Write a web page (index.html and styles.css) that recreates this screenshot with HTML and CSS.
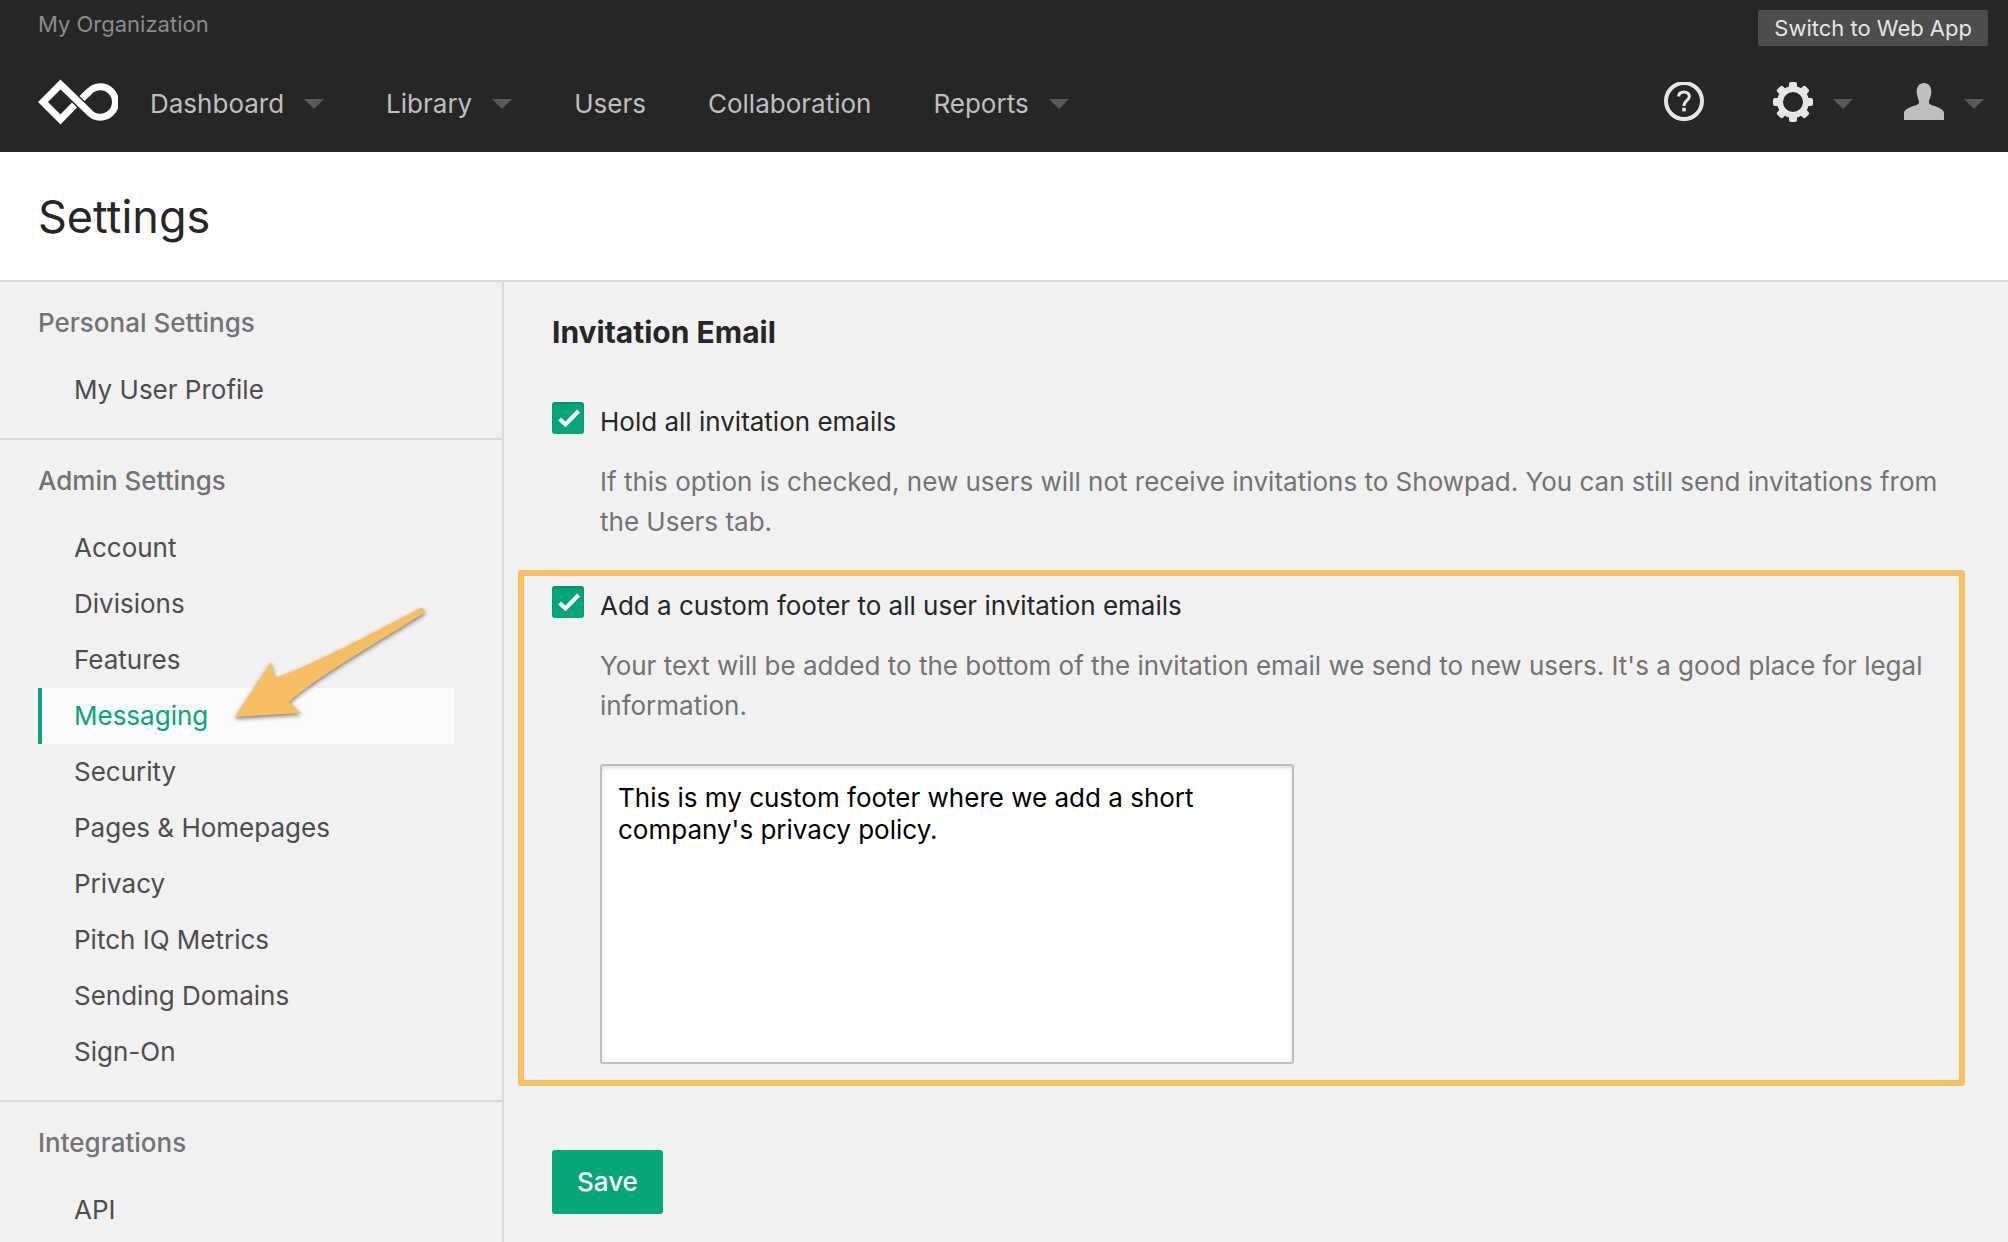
FILE: index.html
```html
<!DOCTYPE html>
<html lang="en">
<head>
    <meta charset="UTF-8">
    <title>Settings</title>
    <meta name="viewport" content="width=device-width, initial-scale=1.0">
    <link rel="stylesheet" href="styles.css">
</head>
<body>
    <header class="site-header">
        <div class="top-bar">
            <span class="org-name">My Organization</span>
            <a class="switch-app" href="#">Switch to Web App</a>
        </div>

        <div class="nav-bar">
            <a class="logo" href="#" aria-label="Home">
                <svg viewBox="0 0 80 46" width="80" height="46">
                    <path d="M36.5 26 L22.5 40.5 L5 23 L22.5 5.5 L51.4 33.6 A15.2 15.2 0 1 0 51.4 12.4 L44 19.5" fill="none" stroke="#ffffff" stroke-width="7"/>
                </svg>
            </a>
            <nav class="main-nav">
                <a class="has-menu" href="#">Dashboard</a>
                <a class="has-menu" href="#">Library</a>
                <a href="#">Users</a>
                <a href="#">Collaboration</a>
                <a class="has-menu" href="#">Reports</a>
            </nav>
            <div class="tools">
                <a class="help" href="#" aria-label="Help">
                    <svg viewBox="0 1 40 40" width="40" height="40">
                        <circle cx="20" cy="20" r="18" fill="none" stroke="#e6e6e6" stroke-width="4"/>
                        <path d="M14.7 15.5 C14.7 12.3 17 11 20 11 C23.2 11 25.3 12.8 25.3 15.5 C25.3 19.5 20 19.5 20 25" fill="none" stroke="#e6e6e6" stroke-width="3"/>
                        <rect x="18.2" y="26.8" width="3.6" height="3.6" fill="#e6e6e6"/>
                    </svg>
                </a>
                <a class="has-menu" href="#" aria-label="Settings">
                    <svg viewBox="-20 -20 40 40" width="40" height="40">
                        <circle r="13" fill="none" stroke="#e6e6e6" stroke-width="6"/>
                        <g fill="#e6e6e6">
                            <rect x="-4" y="-20" width="8" height="8" rx="2"/>
                            <rect x="-4" y="-20" width="8" height="8" rx="2" transform="rotate(45)"/>
                            <rect x="-4" y="-20" width="8" height="8" rx="2" transform="rotate(90)"/>
                            <rect x="-4" y="-20" width="8" height="8" rx="2" transform="rotate(135)"/>
                            <rect x="-4" y="-20" width="8" height="8" rx="2" transform="rotate(180)"/>
                            <rect x="-4" y="-20" width="8" height="8" rx="2" transform="rotate(225)"/>
                            <rect x="-4" y="-20" width="8" height="8" rx="2" transform="rotate(270)"/>
                            <rect x="-4" y="-20" width="8" height="8" rx="2" transform="rotate(315)"/>
                        </g>
                    </svg>
                </a>
                <a class="has-menu" href="#" aria-label="Account">
                    <svg viewBox="0 1 40 40" width="40" height="40">
                        <path d="M20 2 C25 2 27.5 6 27.3 11 C27.1 16 25 18.5 25 21 C25 24 28 24 32 25.5 C37 27.5 40 29 40 32.5 V39 H0 V32.5 C0 29 3 27.5 8 25.5 C12 24 15 24 15 21 C15 18.5 13 16 12.7 11 C12.5 6 15 2 20 2 Z" fill="#bfbfbf"/>
                    </svg>
                </a>
            </div>
        </div>
    </header>

    <div class="page-title">
        <h1>Settings</h1>
    </div>

    <div class="layout">
        <aside class="sidebar">
            <section>
                <h2>Personal Settings</h2>
                <ul>
                    <li><a href="#">My User Profile</a></li>
                </ul>
            </section>
            <section>
                <h2>Admin Settings</h2>
                <ul>
                    <li><a href="#">Account</a></li>
                    <li><a href="#">Divisions</a></li>
                    <li><a href="#">Features</a></li>
                    <li class="active">
                        <a href="#">Messaging</a>
                        <!-- Arrow pointing at the active item -->
                        <svg class="arrow" viewBox="0 0 200 120" width="200" height="120">
                            <path d="M5 107 L41 52 L45 68 C86 54 140 24 191 -2 C194 -2 196 1 194 3 C150 31 88 66 59 92 L71 103 Z" fill="#f7be62"/>
                        </svg>
                    </li>
                    <li><a href="#">Security</a></li>
                    <li><a href="#">Pages &amp; Homepages</a></li>
                    <li><a href="#">Privacy</a></li>
                    <li><a href="#">Pitch IQ Metrics</a></li>
                    <li><a href="#">Sending Domains</a></li>
                    <li><a href="#">Sign-On</a></li>
                </ul>
            </section>
            <section>
                <h2>Integrations</h2>
                <ul>
                    <li><a href="#">API</a></li>
                </ul>
            </section>
        </aside>

        <main>
            <form>
                <h2>Invitation Email</h2>

                <div class="option">
                    <input type="checkbox" id="hold-emails" checked>
                    <div class="option-body">
                        <label for="hold-emails">Hold all invitation emails</label>
                        <p>If this option is checked, new users will not receive invitations to Showpad. You can still send invitations from the Users tab.</p>
                    </div>
                </div>

                <div class="option highlight">
                    <input type="checkbox" id="custom-footer" checked>
                    <div class="option-body">
                        <label for="custom-footer">Add a custom footer to all user invitation emails</label>
                        <p>Your text will be added to the bottom of the invitation email we send to new users. It's a good place for legal information.</p>
                        <textarea aria-label="Custom footer">This is my custom footer where we add a short company's privacy policy.</textarea>
                    </div>
                </div>

                <button class="save" type="submit">Save</button>
            </form>
        </main>
    </div>
</body>
</html>
```
FILE: styles.css
```css
/* General Styles */
* {
    box-sizing: border-box;
}

body {
    display: flex;
    flex-direction: column;
    min-height: 100vh;
    margin: 0;
    background-color: #f1f1f1;
    color: #262626;
    font-family: Inter, 'Liberation Sans', sans-serif;
    font-size: 26px;
    line-height: 40px;
}

a {
    color: inherit;
    text-decoration: none;
}

h1, h2, p, ul {
    margin: 0;
    padding: 0;
}

/* Header Styles */
.site-header {
    background-color: #262626;
    color: #bfbfbf;
}

.top-bar {
    display: flex;
    justify-content: space-between;
    padding: 10px 20px 0 38px;
    font-size: 22px;
    line-height: 36px;
}

.org-name {
    color: #8c8c8c;
    line-height: 28px;
}

.switch-app {
    padding: 0 16px;
    border-radius: 2px;
    background-color: #4d4d4d;
    color: #e6e6e6;
}

.nav-bar {
    display: flex;
    align-items: center;
    height: 106px;
    padding: 10px 24px 0 38px;
}

.nav-bar svg {
    margin-bottom: 4px;
}

.logo {
    display: flex;
    margin-right: 32px;
}

.main-nav {
    display: flex;
    gap: 62px;
}

.tools {
    display: flex;
    gap: 51px;
    margin-left: auto;
}

.tools a {
    display: flex;
}

.tools .help {
    margin-right: 18px;
}

/* Small triangle for items with a menu */
.has-menu {
    display: flex;
    align-items: center;
    gap: 20px;
}

.has-menu::after {
    content: '';
    border: 10px solid transparent;
    border-top-color: #595959;
    border-bottom: 0;
}

/* Page Title */
.page-title {
    padding: 33px 38px 31px;
    border-bottom: 2px solid #d9d9d9;
    background-color: #ffffff;
}

h1 {
    font-size: 45px;
    font-weight: 400;
    line-height: 64px;
}

/* Layout */
.layout {
    display: flex;
    flex: 1;
}

/* Sidebar Styles */
.sidebar {
    flex: 0 0 504px;
    border-right: 2px solid #d9d9d9;
    color: #4d4d4d;
}

.sidebar section {
    padding: 21px 48px 20px 38px;
}

.sidebar section + section {
    border-top: 2px solid #d9d9d9;
}

.sidebar h2 {
    margin-bottom: 19px;
    color: #737373;
    font-size: 26px;
    font-weight: 500;
}

.sidebar ul {
    list-style: none;
}

.sidebar li {
    position: relative;
    padding-left: 32px;
    border-left: 4px solid transparent;
    line-height: 56px;
}

.sidebar .active {
    border-left-color: #05a67a;
    background-color: #fbfbfb;
    color: #05a67a;
}

.arrow {
    position: absolute;
    left: 188px;
    bottom: 14px;
    overflow: visible;
    pointer-events: none;
    filter: drop-shadow(0 2px 2px rgba(0, 0, 0, 0.5));
}

/* Form Styles */
main {
    flex: 1;
    padding: 30px 48px 28px;
}

main h2 {
    margin-bottom: 50px;
    font-size: 30px;
    font-weight: 700;
}

.option {
    display: flex;
    gap: 16px;
}

.option input {
    flex: none;
    appearance: none;
    width: 32px;
    height: 32px;
    margin: 0;
    border-radius: 3px;
    background-color: #05a67a;
    box-shadow: inset 0 2px 3px rgba(0, 0, 0, 0.15);
}

.option input:checked {
    background-image: url("data:image/svg+xml,%3Csvg xmlns='http://www.w3.org/2000/svg' viewBox='0 0 32 32'%3E%3Cpath d='M7.5 17 L13.5 22.5 L26.5 9' fill='none' stroke='%23fff' stroke-width='4'/%3E%3C/svg%3E");
}

.option-body {
    flex: 1;
}

.option label {
    display: block;
    margin-bottom: 20px;
}

.option p {
    color: #737373;
}

/* Orange frame round the footer option */
.highlight {
    margin: 28px -5px 0 -34px;
    padding: 10px 28px 16px;
    border: 6px solid #f7be62;
    border-radius: 3px;
}

textarea {
    display: block;
    width: 694px;
    max-width: 100%;
    height: 300px;
    margin-top: 38px;
    padding: 16px;
    border: 2px solid #bfbfbf;
    border-radius: 3px;
    background-color: #ffffff;
    box-shadow: inset 0 2px 4px rgba(0, 0, 0, 0.12);
    color: #000000;
    font: inherit;
    line-height: 32px;
    resize: none;
}

.save {
    margin-top: 64px;
    padding: 12px 25px;
    border: 0;
    border-radius: 3px;
    background-color: #05a67a;
    color: #ffffff;
    font: inherit;
    font-weight: 500;
}
```
